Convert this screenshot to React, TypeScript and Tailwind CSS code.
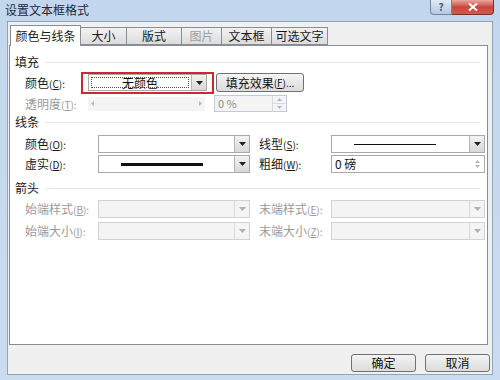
import React from 'react';

const font = { fontFamily: '"Noto Sans CJK SC", "Noto Sans", sans-serif' };

function Arrow({ disabled }: { disabled?: boolean }) {
  return (
    <div className={`w-[15px] h-full flex items-center justify-center border-l ${disabled ? 'border-[#dadada] bg-[#f4f4f4]' : 'border-[#b5b5b5] bg-gradient-to-b from-[#f2f2f2] to-[#d8d8d8]'}`}>
      <svg width="7" height="4" viewBox="0 0 7 4">
        <path d="M0 0h7L3.5 4z" fill={disabled ? '#b0b0b0' : '#222'} />
      </svg>
    </div>
  );
}

function Combo({ width, children, disabled }: { width: number; children?: React.ReactNode; disabled?: boolean }) {
  return (
    <div
      className={`h-[18px] flex border ${disabled ? 'border-[#d2d2d2] bg-[#f4f4f4]' : 'border-[#a9a9a9] bg-white'}`}
      style={{ width }}
    >
      <div className="flex-1 flex items-center justify-center">{children}</div>
      <Arrow disabled={disabled} />
    </div>
  );
}

function Spin({ width, value, disabled }: { width: number; value: string; disabled?: boolean }) {
  return (
    <div className={`h-[17px] flex border ${disabled ? 'border-[#b9cde2] bg-[#f4f4f4]' : 'border-[#a9a9a9] bg-white'}`} style={{ width }}>
      <div className={`flex-1 flex items-center pl-[3px] text-[11px] ${disabled ? 'text-[#8c8c8c]' : 'text-[#111]'}`}>{value}</div>
      <div className="w-[14px] flex flex-col border-l border-[#dadada] bg-[#f4f4f4]">
        <div className="flex-1 flex items-center justify-center border-b border-[#dadada]">
          <svg width="5" height="3" viewBox="0 0 5 3"><path d="M0 3h5L2.5 0z" fill="#a8b8c8" /></svg>
        </div>
        <div className="flex-1 flex items-center justify-center">
          <svg width="5" height="3" viewBox="0 0 5 3"><path d="M0 0h5L2.5 3z" fill="#a8b8c8" /></svg>
        </div>
      </div>
    </div>
  );
}

function Label({ text, k, w, disabled }: { text: string; k: string; w: number; disabled?: boolean }) {
  return (
    <div className={`text-[12px] leading-none whitespace-nowrap ${disabled ? 'text-[#9a9a9a]' : 'text-[#1a1a1a]'}`} style={{ width: w }}>
      {text}
      <span className="text-[10px]">(<span className="underline">{k}</span>):</span>
    </div>
  );
}

function Heading({ text }: { text: string }) {
  return (
    <div className="h-[16px] flex items-center gap-[6px] pl-[5px] pr-[7px]">
      <span className="text-[12px] leading-none text-[#1a1a1a]">{text}</span>
      <div className="flex-1 h-px bg-[#e6e6e6]" />
    </div>
  );
}

function Tab({ text, active, disabled, w }: { text: string; active?: boolean; disabled?: boolean; w: number }) {
  return (
    <div
      className={`flex items-center justify-center text-[12px] leading-none border border-[#898c95] ${active ? 'h-[21px] bg-white border-b-0 -mb-px z-10 relative' : 'h-[18px] bg-gradient-to-b from-[#f2f2f2] to-[#dcdcdc] -ml-px'} ${disabled ? 'text-[#a0a0a0]' : 'text-[#1a1a1a]'}`}
      style={{ width: w }}
    >
      {text}
    </div>
  );
}

export default function App() {
  return (
    <div className="w-[500px] h-[380px] bg-gradient-to-b from-[#c2d7ee] to-[#cadcef] flex flex-col overflow-hidden" style={font}>
      {/* title bar */}
      <div className="h-[21px] flex items-start">
        <div className="pl-[5px] pt-[4px] text-[12px] leading-none text-[#1e2a3a]">设置文本框格式</div>
        <div className="ml-auto mr-[6px] flex">
          <div className="w-[22px] h-[15px] rounded-bl-[4px] border border-t-0 border-[#6e86a3] bg-gradient-to-b from-[#dfe9f5] to-[#b6c9df] flex items-center justify-center text-[10px] leading-none font-bold text-[#445a75]">?</div>
          <div className="w-[42px] h-[15px] rounded-br-[4px] border border-l-0 border-t-0 border-[#7a2f2f] bg-gradient-to-b from-[#e9a99f] via-[#c9463d] to-[#cf5b4d] flex items-center justify-center">
            <svg width="10" height="8" viewBox="0 0 10 8"><path d="M1 0.5L9 7.5M9 0.5L1 7.5" stroke="#fff" strokeWidth="2" /></svg>
          </div>
        </div>
      </div>

      {/* body */}
      <div className="mx-[7px] mb-[5px] flex-1 bg-[#f0f0f0] border border-[#8ea5bf] flex flex-col pl-[1px] pr-[4px] pt-[2px]">
        <div className="flex items-end h-[21px] pl-px">
          <Tab text="颜色与线条" active w={71} />
          <Tab text="大小" w={47} />
          <Tab text="版式" w={56} />
          <Tab text="图片" disabled w={41} />
          <Tab text="文本框" w={51} />
          <Tab text="可选文字" w={57} />
        </div>
        <div className="h-[300px] bg-white border border-[#898c95] flex flex-col pt-[8px]">
          <Heading text="填充" />
          {/* fill color */}
          <div className="h-[23px] flex items-center pl-[15px] mt-[1px]">
            <Label text="颜色" k="C" w={56} />
            <div className="w-[133px] h-[22px] border-2 border-[#d2262f] flex items-center pl-[5px]">
              <div className="w-[119px] h-[17px] flex border border-[#a9a9a9] bg-white">
                <div className="flex-1 m-[2px] border border-dotted border-[#555] flex items-center justify-center text-[12px] leading-none text-[#111]">无颜色</div>
                <Arrow />
              </div>
            </div>
            <div className="ml-[2px] w-[88px] h-[19px] rounded-[3px] border border-[#707070] bg-gradient-to-b from-[#f4f4f4] to-[#dcdcdc] flex items-center justify-center text-[12px] leading-none text-[#111]">
              填充效果<span className="text-[10px]">(<span className="underline">F</span>)...</span>
            </div>
          </div>
          {/* transparency */}
          <div className="h-[17px] flex items-center pl-[15px] mt-[1px]">
            <Label text="透明度" k="T" w={63} disabled />
            <div className="w-[117px] h-[14px] bg-[#f4f4f4] flex items-center justify-between px-[3px]">
              <svg width="3" height="5" viewBox="0 0 3 5"><path d="M3 0v5L0 2.5z" fill="#b8b8b8" /></svg>
              <svg width="3" height="5" viewBox="0 0 3 5"><path d="M0 0v5L3 2.5z" fill="#b8b8b8" /></svg>
            </div>
            <div className="ml-[9px]">
              <Spin width={73} value="0 %" disabled />
            </div>
          </div>

          <div className="mt-[2px]"><Heading text="线条" /></div>
          <div className="h-[18px] flex items-center pl-[15px] mt-[5px]">
            <Label text="颜色" k="O" w={73} />
            <Combo width={152} />
            <div className="ml-[9px]"><Label text="线型" k="S" w={72} /></div>
            <Combo width={154}>
              <div className="w-[82px] h-px bg-[#111] -ml-[12px]" />
            </Combo>
          </div>
          <div className="h-[18px] flex items-center pl-[15px] mt-[2px]">
            <Label text="虚实" k="D" w={73} />
            <Combo width={152}>
              <div className="w-[82px] h-[3px] bg-[#111] -ml-[10px]" />
            </Combo>
            <div className="ml-[9px]"><Label text="粗细" k="W" w={72} /></div>
            <div className="h-[18px] w-[154px] flex border border-[#a9a9a9] bg-white">
              <div className="flex-1 flex items-center pl-[3px] text-[12px] leading-none text-[#111]">0 磅</div>
              <div className="w-[14px] flex flex-col">
                <div className="flex-1 flex items-end justify-center pb-px">
                  <svg width="5" height="3" viewBox="0 0 5 3"><path d="M0 3h5L2.5 0z" fill="#a8b8c8" /></svg>
                </div>
                <div className="flex-1 flex items-start justify-center pt-px">
                  <svg width="5" height="3" viewBox="0 0 5 3"><path d="M0 0h5L2.5 3z" fill="#a8b8c8" /></svg>
                </div>
              </div>
            </div>
          </div>

          <div className="mt-[7px]"><Heading text="箭头" /></div>
          <div className="h-[19px] flex items-center pl-[15px] mt-[3px]">
            <Label text="始端样式" k="B" w={73} disabled />
            <Combo width={152} disabled />
            <div className="ml-[9px]"><Label text="末端样式" k="E" w={72} disabled /></div>
            <Combo width={154} disabled />
          </div>
          <div className="h-[19px] flex items-center pl-[15px] mt-[3px]">
            <Label text="始端大小" k="I" w={73} disabled />
            <Combo width={152} disabled />
            <div className="ml-[9px]"><Label text="末端大小" k="Z" w={72} disabled /></div>
            <Combo width={154} disabled />
          </div>
        </div>
        <div className="flex justify-end gap-[9px] pt-[9px] -mr-[2px]">
          <div className="w-[65px] h-[18px] rounded-[3px] border border-[#707070] bg-gradient-to-b from-[#f4f4f4] to-[#dcdcdc] flex items-center justify-center text-[12px] leading-none text-[#111]">确定</div>
          <div className="w-[65px] h-[18px] rounded-[3px] border border-[#707070] bg-gradient-to-b from-[#f4f4f4] to-[#dcdcdc] flex items-center justify-center text-[12px] leading-none text-[#111]">取消</div>
        </div>
      </div>
    </div>
  );
}
